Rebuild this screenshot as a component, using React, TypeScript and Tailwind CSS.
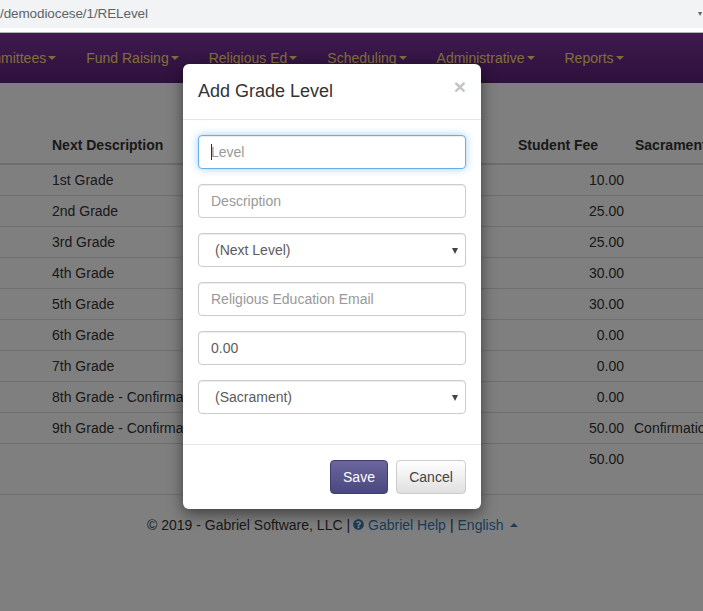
import {FaQuestionCircle} from "react-icons/fa";

const navItems = ["Committees", "Fund Raising", "Religious Ed", "Scheduling", "Administrative", "Reports"];

const rows = [
  {next: "1st Grade", fee: "10.00", sacrament: ""},
  {next: "2nd Grade", fee: "25.00", sacrament: ""},
  {next: "3rd Grade", fee: "25.00", sacrament: ""},
  {next: "4th Grade", fee: "30.00", sacrament: ""},
  {next: "5th Grade", fee: "30.00", sacrament: ""},
  {next: "6th Grade", fee: "0.00", sacrament: ""},
  {next: "7th Grade", fee: "0.00", sacrament: ""},
  {next: "8th Grade - Confirmation", fee: "0.00", sacrament: ""},
  {next: "9th Grade - Confirmation", fee: "50.00", sacrament: "Confirmation"},
];

const fieldClass =
  "block h-[34px] w-full rounded border border-[#ccc] bg-white px-3 text-sm text-[#5c5c5c] shadow-[inset_0_1px_1px_rgba(0,0,0,0.075)] placeholder:text-[#999] outline-none";

function SelectField({label}: {label: string}) {
  return (
    <div className="relative">
      <select className={`${fieldClass} appearance-none !pl-[16px]`} defaultValue={label}>
        <option>{label}</option>
      </select>
      <span className="pointer-events-none absolute right-[8px] top-[15px] h-0 w-0 border-x-[3px] border-t-[6px] border-x-transparent border-t-[#444]" />
    </div>
  );
}

export default function App() {
  return (
    <div className="relative h-[611px] w-[703px] overflow-hidden bg-white font-['Liberation_Sans',Arial,sans-serif] text-sm text-[#333]">
      {/* Browser address bar */}
      <div className="h-[33px] border-b border-[#b5b5b5] bg-white">
        <div className="flex h-[28px] items-center justify-between bg-[#f1f3f4] pr-[1px]">
          <span className="text-[13.5px] tracking-[-0.1px] text-[#5f6368]">/demodiocese/1/RELevel</span>
          <span className="text-[8px] text-[#5f6368]">▾</span>
        </div>
      </div>

      {/* Nav bar */}
      <nav className="flex h-[50px] items-center bg-gradient-to-b from-[#7e349f] to-[#5c2178] pb-[1px] text-[#fedd76]">
        <div className="-ml-[28.5px] flex gap-[30px]">
          {navItems.map((item) => (
            <a key={item} className="flex items-center gap-[2px]">
              {item}
              <span className="mt-[1px] h-0 w-0 border-x-4 border-t-4 border-x-transparent border-t-[#fedd76]" />
            </a>
          ))}
        </div>
      </nav>

      {/* Table */}
      <div className="overflow-hidden pt-[44px]">
        <table className="w-[827px] table-fixed border-collapse">
          <colgroup>
            <col className="w-[44px]" />
            <col className="w-[466px]" />
            <col className="w-[117px]" />
            <col className="w-[200px]" />
          </colgroup>
          <thead>
            <tr className="h-[37px] border-b-2 border-[#ddd] align-bottom font-bold">
              <th />
              <th className="px-2 pb-[8px] text-left">Next Description</th>
              <th className="px-2 pb-[8px] text-left">Student Fee</th>
              <th className="px-2 pb-[8px] text-left">Sacrament</th>
            </tr>
          </thead>
          <tbody>
            {rows.map((row) => (
              <tr key={row.next} className="h-[31px] border-b border-[#ddd]">
                <td />
                <td className="px-2">{row.next}</td>
                <td className="pr-[3px] text-right">{row.fee}</td>
                <td className="px-[7px]">{row.sacrament}</td>
              </tr>
            ))}
            <tr className="h-[51px] border-b border-[#ddd] align-top">
              <td />
              <td />
              <td className="pr-[3px] pt-[5px] text-right">50.00</td>
              <td />
            </tr>
          </tbody>
        </table>
      </div>

      {/* Footer */}
      <footer className="flex items-center gap-1 pl-[147px] pt-[20px]">
        <span>© 2019 - Gabriel Software, LLC |</span>
        <a className="-ml-px flex items-center gap-1 text-[#337ab7]">
          <FaQuestionCircle className="h-[11px] w-[11px]" />
          Gabriel Help
        </a>
        <span>|</span>
        <a className="text-[#337ab7]">English</a>
        <span className="ml-[3px] h-0 w-0 border-x-4 border-b-4 border-x-transparent border-b-[#337ab7]" />
      </footer>

      {/* Backdrop */}
      <div className="absolute inset-x-0 bottom-0 top-[33px] bg-black/50" />

      {/* Modal */}
      <div className="absolute left-[183px] top-[64px] w-[298px] rounded-md bg-white shadow-[0_5px_15px_rgba(0,0,0,0.5)]">
        <div className="relative h-[56px] border-b border-[#e5e5e5] px-[15px] pt-[15px]">
          <h4 className="text-lg leading-[24px] text-[#333]">Add Grade Level</h4>
          <span className="absolute right-[15px] top-[9px] text-[21px] font-bold leading-[28px] text-[#c4c4c4]">×</span>
        </div>
        <div className="flex h-[325px] flex-col gap-[15px] border-b border-[#e5e5e5] px-[15px] pt-[15px]">
          <div className="relative">
            <input
              className="block h-[34px] w-full rounded border border-[#66afe9] bg-white px-3 text-sm text-[#5c5c5c] shadow-[inset_0_1px_1px_rgba(0,0,0,0.075),0_0_8px_rgba(102,175,233,0.6)] outline-none placeholder:text-[#999]"
              placeholder="Level"
            />
            <span className="absolute left-[13px] top-[9px] h-[16px] w-px bg-[#333]" />
          </div>
          <input className={fieldClass} placeholder="Description" />
          <SelectField label="(Next Level)" />
          <input className={fieldClass} placeholder="Religious Education Email" />
          <input className={fieldClass} defaultValue="0.00" />
          <SelectField label="(Sacrament)" />
        </div>
        <div className="flex h-[64px] justify-end gap-2 px-[15px] pt-[15px]">
          <button className="h-[34px] w-[58px] rounded border border-[#3f3c6e] bg-gradient-to-b from-[#6b669c] to-[#4a4780] text-sm text-white">
            Save
          </button>
          <button className="h-[34px] w-[70px] rounded border border-[#ccc] bg-gradient-to-b from-white to-[#e0e0e0] text-sm text-[#444]">
            Cancel
          </button>
        </div>
      </div>
    </div>
  );
}
